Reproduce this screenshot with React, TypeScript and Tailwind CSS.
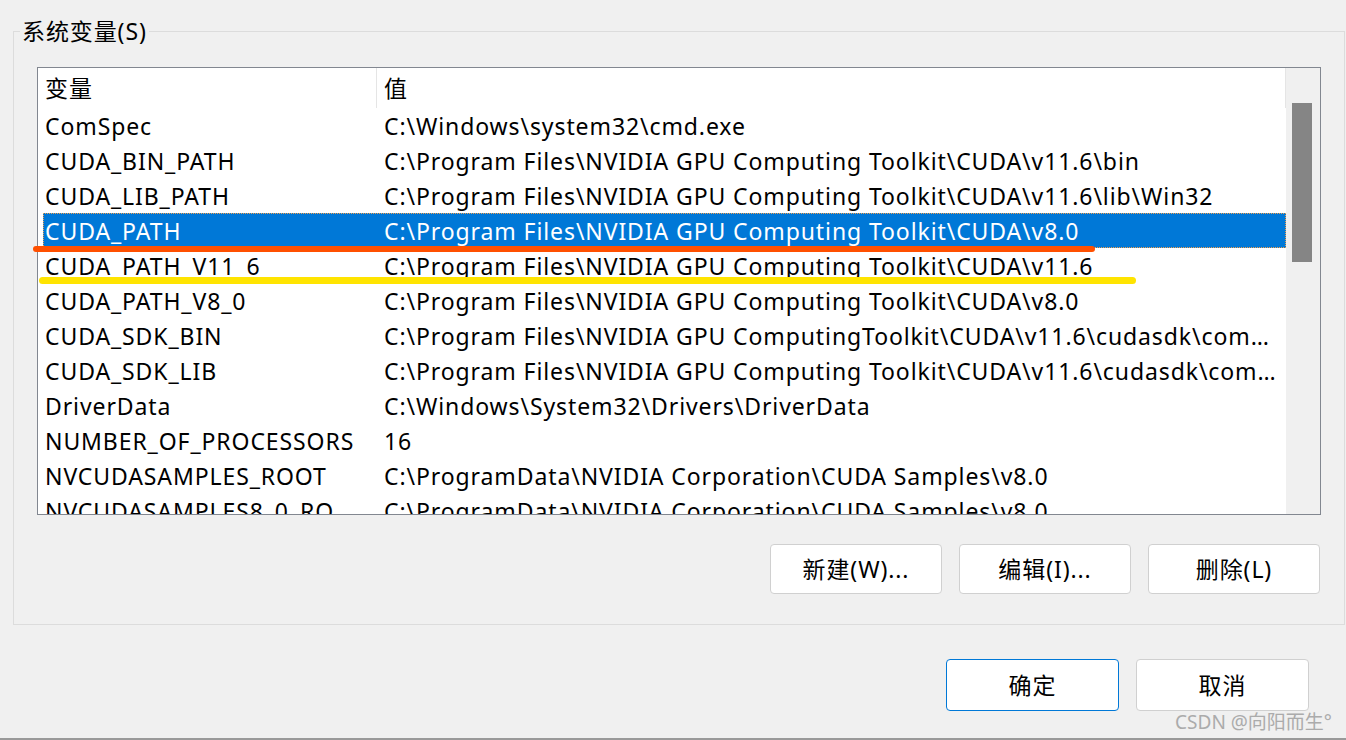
import React from 'react'

const rows: [string, string][] = [
  ['ComSpec', 'C:\\Windows\\system32\\cmd.exe'],
  ['CUDA_BIN_PATH', 'C:\\Program Files\\NVIDIA GPU Computing Toolkit\\CUDA\\v11.6\\bin'],
  ['CUDA_LIB_PATH', 'C:\\Program Files\\NVIDIA GPU Computing Toolkit\\CUDA\\v11.6\\lib\\Win32'],
  ['CUDA_PATH', 'C:\\Program Files\\NVIDIA GPU Computing Toolkit\\CUDA\\v8.0'],
  ['CUDA_PATH_V11_6', 'C:\\Program Files\\NVIDIA GPU Computing Toolkit\\CUDA\\v11.6'],
  ['CUDA_PATH_V8_0', 'C:\\Program Files\\NVIDIA GPU Computing Toolkit\\CUDA\\v8.0'],
  ['CUDA_SDK_BIN', 'C:\\Program Files\\NVIDIA GPU ComputingToolkit\\CUDA\\v11.6\\cudasdk\\common\\bin'],
  ['CUDA_SDK_LIB', 'C:\\Program Files\\NVIDIA GPU Computing Toolkit\\CUDA\\v11.6\\cudasdk\\common\\lib'],
  ['DriverData', 'C:\\Windows\\System32\\Drivers\\DriverData'],
  ['NUMBER_OF_PROCESSORS', '16'],
  ['NVCUDASAMPLES_ROOT', 'C:\\ProgramData\\NVIDIA Corporation\\CUDA Samples\\v8.0'],
  ['NVCUDASAMPLES8_0_ROOT', 'C:\\ProgramData\\NVIDIA Corporation\\CUDA Samples\\v8.0'],
]

const font = { fontFamily: '"Noto Sans", "Noto Sans CJK SC", sans-serif' }

function WinButton({ label, primary, tall }: { label: string; primary?: boolean; tall?: boolean }) {
  return (
    <button
      className={
        (tall ? 'h-[52px] w-[173px] ' : 'h-[50px] w-[172px] ') +
        (primary ? 'border-[#0078d7] ' : 'border-[#d0d0d0] ') +
        'flex items-center justify-center rounded-[4px] border bg-white text-[23px] tracking-[0.9px] text-black'
      }
    >
      {label}
    </button>
  )
}

export default function App() {
  return (
    <div className="relative h-[740px] w-[1346px] overflow-hidden bg-[#f0f0f0] text-black" style={font}>
      <div className="pt-[31px] pl-[13px]">
        <div className="relative h-[594px] w-[1332px] border border-[#dcdcdc] pt-[35px] pl-[23px]">
          <div className="absolute -top-[13px] left-[6px] bg-[#f0f0f0] px-[2px] text-[23px] leading-[24px] tracking-[0.9px]">
            系统变量(S)
          </div>

          {/* list view */}
          <div className="flex h-[448px] w-[1284px] border border-[#828790] bg-white text-[23px] tracking-[0.9px]">
            <div className="flex min-w-0 flex-1 flex-col overflow-hidden">
              <div className="flex h-[40px] shrink-0">
                <div className="flex w-[339px] items-center border-r border-[#e5e5e5] pl-[7px]">变量</div>
                <div className="flex flex-1 items-center border-r border-[#e5e5e5] pl-[7px]">值</div>
              </div>
              <div className="pl-[5px]">
                {rows.map(([name, value], i) => {
                  const sel = i === 3
                  return (
                    <div
                      key={name}
                      className={
                        sel
                          ? 'flex h-[35px] items-center whitespace-nowrap border border-dotted border-[#f0a050] bg-[#0078d7] pt-[2px] text-white'
                          : 'flex h-[35px] items-center whitespace-nowrap border border-transparent pt-[2px]'
                      }
                    >
                      <div className="w-[340px] shrink-0 overflow-hidden text-ellipsis pr-[24px] pl-[1px]">{name}</div>
                      <div className="min-w-0 flex-1 overflow-hidden text-ellipsis pr-[8px]">{value}</div>
                    </div>
                  )
                })}
              </div>
            </div>
            {/* scrollbar */}
            <div className="w-[34px] shrink-0 bg-[#f0f0f0] pt-[35px] pl-[6px]">
              <div className="h-[159px] w-[20px] bg-[#858585]" />
            </div>
          </div>

          <div className="mt-[29px] flex w-[1283px] justify-end gap-[17px]">
            <WinButton label="新建(W)..." />
            <WinButton label="编辑(I)..." />
            <WinButton label="删除(L)" />
          </div>
        </div>
      </div>

      <div className="mt-[34px] mr-[37px] flex justify-end gap-[17px]">
        <WinButton label="确定" primary tall />
        <WinButton label="取消" tall />
      </div>

      {/* hand-drawn markers */}
      <div className="absolute left-[33px] top-[246px] h-[6px] w-[1062px] rounded-full bg-[#ff5000]" />
      <div className="absolute left-[39px] top-[277px] h-[7px] w-[1097px] rounded-full bg-[#ffe400]" />

      <div className="absolute right-[14px] top-[708px] text-[19px] text-[#ababab]">CSDN @向阳而生°</div>
      <div className="absolute bottom-0 left-0 h-[2px] w-full bg-[#999999]" />
    </div>
  )
}
